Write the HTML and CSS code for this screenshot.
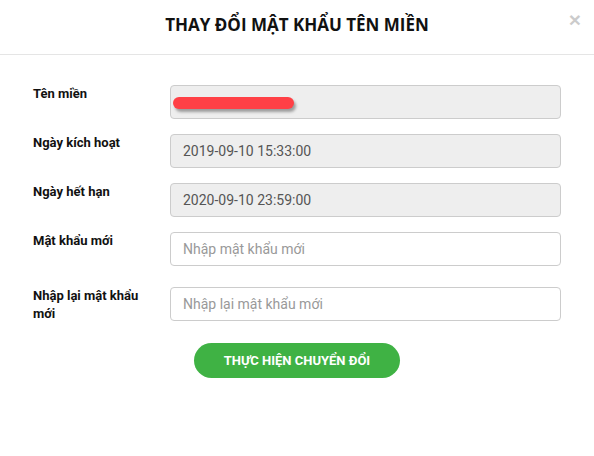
FILE: index.html
```html
<!DOCTYPE html>
<html lang="vi">
<head>
    <meta charset="UTF-8">
    <meta name="viewport" content="width=device-width, initial-scale=1.0">
    <title>Thay đổi mật khẩu tên miền</title>
    <link rel="stylesheet" href="styles.css">
</head>
<body>
    <div class="modal">
        <div class="modal-header">
            <h4 class="modal-title">THAY ĐỔI MẬT KHẨU TÊN MIỀN</h4>
            <button type="button" class="close">&times;</button>
        </div>
        <form class="modal-body">
            <div class="field">
                <label>Tên miền</label>
                <div class="input readonly">
                    <span class="redacted"></span>
                </div>
            </div>
            <div class="field">
                <label>Ngày kích hoạt</label>
                <input class="input readonly" type="text" value="2019-09-10 15:33:00" readonly>
            </div>
            <div class="field">
                <label>Ngày hết hạn</label>
                <input class="input readonly" type="text" value="2020-09-10 23:59:00" readonly>
            </div>
            <div class="field field-wide">
                <label>Mật khẩu mới</label>
                <input class="input" type="password" placeholder="Nhập mật khẩu mới">
            </div>
            <div class="field">
                <label>Nhập lại mật khẩu mới</label>
                <input class="input" type="password" placeholder="Nhập lại mật khẩu mới">
            </div>
            <div class="actions">
                <button type="submit" class="btn-submit">THỰC HIỆN CHUYỂN ĐỔI</button>
            </div>
        </form>
    </div>
</body>
</html>
```

FILE: styles.css
```css
* {
    box-sizing: border-box;
}
body {
    margin: 0;
    font-family: Roboto, "Liberation Sans", Arial, sans-serif;
    background-color: #fff;
}
.modal {
    width: 594px;
    height: 456px;
    background-color: #fff;
}
.modal-header {
    position: relative;
    padding: 12px 15px 16px;
    border-bottom: 1px solid #e5e5e5;
}
.modal-title {
    margin: 0;
    font-family: "Open Sans", "Liberation Sans", sans-serif;
    font-weight: 700;
    font-size: 17px;
    line-height: 26px;
    text-align: center;
    color: #111;
}
.close {
    position: absolute;
    top: 9px;
    right: 13px;
    padding: 0;
    border: 0;
    background: none;
    font-family: "Liberation Sans", Arial, sans-serif;
    font-size: 21px;
    font-weight: 700;
    line-height: 1;
    color: #000;
    opacity: 0.2;
    cursor: pointer;
}
.modal-body {
    padding: 30px 33px 0 33px;
}
.field {
    display: flex;
    align-items: flex-start;
    margin-bottom: 15px;
}
.field-wide {
    margin-bottom: 21px;
}
label {
    width: 137px;
    flex-shrink: 0;
    padding-right: 10px;
    font-size: 13px;
    font-weight: 700;
    line-height: 18px;
    color: #111;
}
.input {
    width: 391px;
    height: 34px;
    padding: 6px 12px;
    border: 1px solid #ccc;
    border-radius: 4px;
    background-color: #fff;
    font-family: Roboto, "Liberation Sans", sans-serif;
    font-size: 14px;
    color: #555;
    outline: none;
}
.input::placeholder {
    color: #999;
}
.input.readonly {
    background-color: #eee;
}
div.input {
    display: flex;
    align-items: center;
    padding-left: 2px;
}
.redacted {
    display: block;
    width: 121px;
    height: 12px;
    margin-top: 1px;
    border-radius: 6px;
    background-color: #ff4046;
    box-shadow: 2px 3px 3px rgba(0, 0, 0, 0.35);
}
.actions {
    display: flex;
    justify-content: center;
    padding-top: 5px;
}
.btn-submit {
    width: 206px;
    height: 35px;
    border: 0;
    border-radius: 18px;
    background-color: #3fb244;
    color: #fff;
    font-family: Roboto, "Liberation Sans", sans-serif;
    font-size: 13px;
    font-weight: 700;
    cursor: pointer;
}
```
